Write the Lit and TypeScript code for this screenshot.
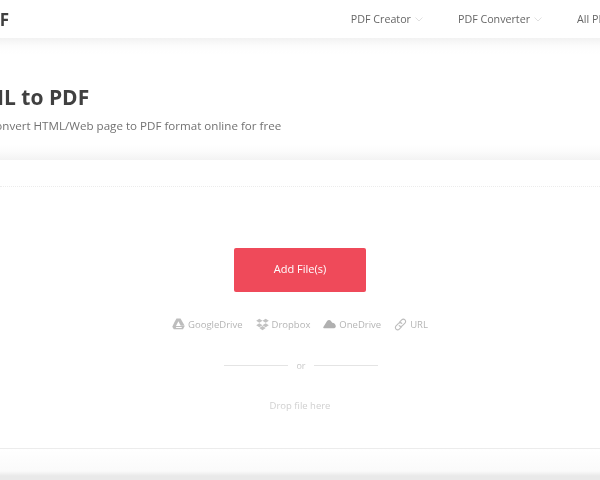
import { LitElement, html, css, svg } from "lit";
import { customElement } from "lit/decorators.js";

const gdrive = svg`<svg class="ic" viewBox="0 0 14 13" width="13" height="12"><path fill="#bdbdbd" d="M4.800 0.500h4.400l4.500 7.800H9.400L6.900 3.600 4.400 8.300 3 10.300 0.300 9.400 2.400 5z"/><path fill="#bdbdbd" d="M3.400 8.800h10.300l-1.800 3.500H1.900L.3 9.600z"/><path fill="#fff" d="M4.600 9.700h6.200l-.6 1.100H4z"/></svg>`;
const dropbox = svg`<svg class="ic" viewBox="0 0 14 14" width="13" height="13"><path fill="#c2c2c2" d="M3.600 0.800L7 3 3.600 5.200 0.200 3zM10.400 0.800L13.800 3l-3.400 2.200L7 3zM3.600 5.600L7 7.800 3.600 10 0.200 7.800zM10.400 5.600l3.400 2.200-3.400 2.200L7 7.800zM3.600 10.900L7 8.700l3.400 2.200L7 13.200z"/></svg>`;
const cloud = svg`<svg class="ic" viewBox="0 0 14 10" width="13" height="10"><path fill="#b0b0b0" d="M1 9.500C.3 9.500 0 8.800.4 8.200L4.400 1.800C5.300.3 7.400.2 8.400 1.500L9.900 3.600C11.800 3.500 13.800 5.400 13.800 7.500 13.800 8.700 13 9.500 12 9.500z"/></svg>`;
const link = svg`<svg class="ic" viewBox="0 0 14 14" width="13" height="13" fill="none" stroke="#bcbcbc" stroke-width="1.200" stroke-linecap="round" stroke-linejoin="round"><path d="M6 4.400L8.300 2.100a2.400 2.400 0 0 1 3.500 3.500L9.100 8.300a2.400 2.400 0 0 1-3.500 0"/><path d="M8 9.600L5.700 11.900a2.400 2.400 0 0 1-3.500-3.500L4.900 5.700a2.400 2.400 0 0 1 3.500 0"/></svg>`;
const chevron = svg`<svg class="chev" viewBox="0 0 8 5" width="8" height="5" fill="none" stroke="#e0e0e0" stroke-width="1"><path d="M.5 .5L4 4 7.500 .5"/></svg>`;

@customElement("app-root")
export class AppRoot extends LitElement {
  static styles = css`
    :host { display: block; width: 600px; height: 480px; overflow: hidden; background: #fff; font-family: "Open Sans", "Liberation Sans", sans-serif; }
    .page { width: 600px; height: 480px; display: flex; flex-direction: column; overflow: hidden; filter: blur(0.45px); }
    .header { height: 38px; flex: none; display: flex; align-items: center; justify-content: space-between; }
    .logo { font-size: 17px; font-weight: 700; color: #3f3f3f; margin-left: -2px; width: 11px; overflow: hidden; direction: rtl; }
    .nav { display: flex; gap: 35px; margin-right: -41px; font-size: 10.700px; color: #666; white-space: nowrap; }
    .nav span.item { display: inline-flex; align-items: center; gap: 4px; }
    .hero { height: 122px; flex: none; box-sizing: border-box; padding-top: 46px; background: linear-gradient(#f2f2f2 0, #fcfcfc 8px, #fff 16px, #fff 106px, #fbfbfb 114px, #f3f3f3 122px); }
    .title { margin: 0 0 0 -44px; font-size: 21px; line-height: 26px; font-weight: 700; color: #404040; white-space: nowrap; }
    .sub { margin: 8px 0 0 -12px; font-size: 11.600px; line-height: 16px; color: #727272; white-space: nowrap; }
    .gap { height: 27px; flex: none; border-bottom: 1px dotted #ececec; box-sizing: border-box; }
    .zone { height: 262px; flex: none; box-sizing: border-box; border-bottom: 1px solid #ececec; display: flex; flex-direction: column; align-items: center; padding-top: 61px; }
    .btn { width: 132px; height: 44px; box-sizing: border-box; padding-bottom: 3px; border-radius: 2px; background: #ef4a5a; color: #fff; font-size: 11px; font-weight: 400; display: flex; align-items: center; justify-content: center; }
    .sources { display: flex; align-items: center; gap: 13px; margin-top: 25px; height: 14px; font-size: 9.500px; color: #b5b5b5; }
    .src { display: inline-flex; align-items: center; gap: 3px; }
    .ic { display: block; }
    .or { display: flex; align-items: center; gap: 8px; margin: 28px 0 0 2px; height: 12px; font-size: 9px; color: #c8c8c8; }
    .line { width: 64px; height: 1px; background: #e4e4e4; }
    .drop { margin-top: 28px; font-size: 9.500px; color: #d0d0d0; }
    .foot { flex: 1; background: linear-gradient(#fff 0, #fafafa 22px, #e9e9e9 27px); }
  `;

  render() {
    return html`<div class="page">
      <div class="header">
        <div class="logo">F</div>
        <div class="nav">
          <span class="item">PDF Creator ${chevron}</span>
          <span class="item">PDF Converter ${chevron}</span>
          <span class="item">All PDF Tools</span>
        </div>
      </div>
      <div class="hero">
        <h1 class="title">HTML to PDF</h1>
        <p class="sub">Convert HTML/Web page to PDF format online for free</p>
      </div>
      <div class="gap"></div>
      <div class="zone">
        <div class="btn">Add File(s)</div>
        <div class="sources">
          <span class="src">${gdrive}GoogleDrive</span>
          <span class="src">${dropbox}Dropbox</span>
          <span class="src">${cloud}OneDrive</span>
          <span class="src">${link}URL</span>
        </div>
        <div class="or"><span class="line"></span>or<span class="line"></span></div>
        <div class="drop">Drop file here</div>
      </div>
      <div class="foot"></div>
    </div>`;
  }
}
